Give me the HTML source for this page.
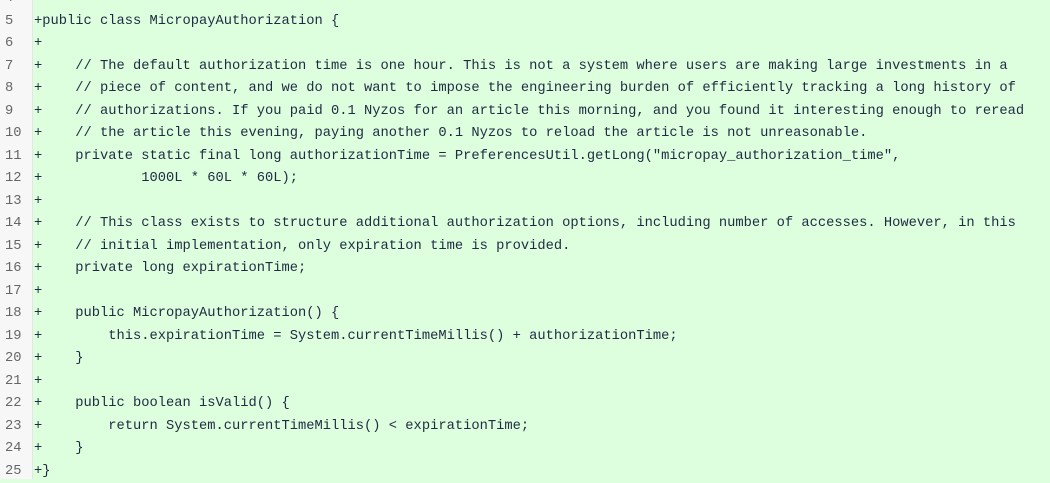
<!DOCTYPE html>
<html><head><style>
html,body{margin:0;padding:0;width:1050px;height:479px;overflow:hidden;background:#ddffdd;}
.g{position:absolute;left:0;top:0;width:32px;height:479px;background:#f7f7f7;border-right:1px solid #e5e5e5;}
.c{position:absolute;left:0;top:-12px;font-family:"Liberation Mono",monospace;font-size:13.75px;}
.l{height:22.5px;line-height:22.5px;white-space:pre;position:relative;}
.n{position:absolute;left:5px;color:#666;}
.t{position:absolute;left:34px;color:#1f2a44;}
</style></head><body>
<div class="g"></div>
<div class="c">
<div class="l"><span class="n">4</span><span class="t">+</span></div>
<div class="l"><span class="n">5</span><span class="t">+public class MicropayAuthorization {</span></div>
<div class="l"><span class="n">6</span><span class="t">+</span></div>
<div class="l"><span class="n">7</span><span class="t">+    // The default authorization time is one hour. This is not a system where users are making large investments in a</span></div>
<div class="l"><span class="n">8</span><span class="t">+    // piece of content, and we do not want to impose the engineering burden of efficiently tracking a long history of</span></div>
<div class="l"><span class="n">9</span><span class="t">+    // authorizations. If you paid 0.1 Nyzos for an article this morning, and you found it interesting enough to reread</span></div>
<div class="l"><span class="n">10</span><span class="t">+    // the article this evening, paying another 0.1 Nyzos to reload the article is not unreasonable.</span></div>
<div class="l"><span class="n">11</span><span class="t">+    private static final long authorizationTime = PreferencesUtil.getLong("micropay_authorization_time",</span></div>
<div class="l"><span class="n">12</span><span class="t">+            1000L * 60L * 60L);</span></div>
<div class="l"><span class="n">13</span><span class="t">+</span></div>
<div class="l"><span class="n">14</span><span class="t">+    // This class exists to structure additional authorization options, including number of accesses. However, in this</span></div>
<div class="l"><span class="n">15</span><span class="t">+    // initial implementation, only expiration time is provided.</span></div>
<div class="l"><span class="n">16</span><span class="t">+    private long expirationTime;</span></div>
<div class="l"><span class="n">17</span><span class="t">+</span></div>
<div class="l"><span class="n">18</span><span class="t">+    public MicropayAuthorization() {</span></div>
<div class="l"><span class="n">19</span><span class="t">+        this.expirationTime = System.currentTimeMillis() + authorizationTime;</span></div>
<div class="l"><span class="n">20</span><span class="t">+    }</span></div>
<div class="l"><span class="n">21</span><span class="t">+</span></div>
<div class="l"><span class="n">22</span><span class="t">+    public boolean isValid() {</span></div>
<div class="l"><span class="n">23</span><span class="t">+        return System.currentTimeMillis() &lt; expirationTime;</span></div>
<div class="l"><span class="n">24</span><span class="t">+    }</span></div>
<div class="l"><span class="n">25</span><span class="t">+}</span></div>
</div>
</body></html>
